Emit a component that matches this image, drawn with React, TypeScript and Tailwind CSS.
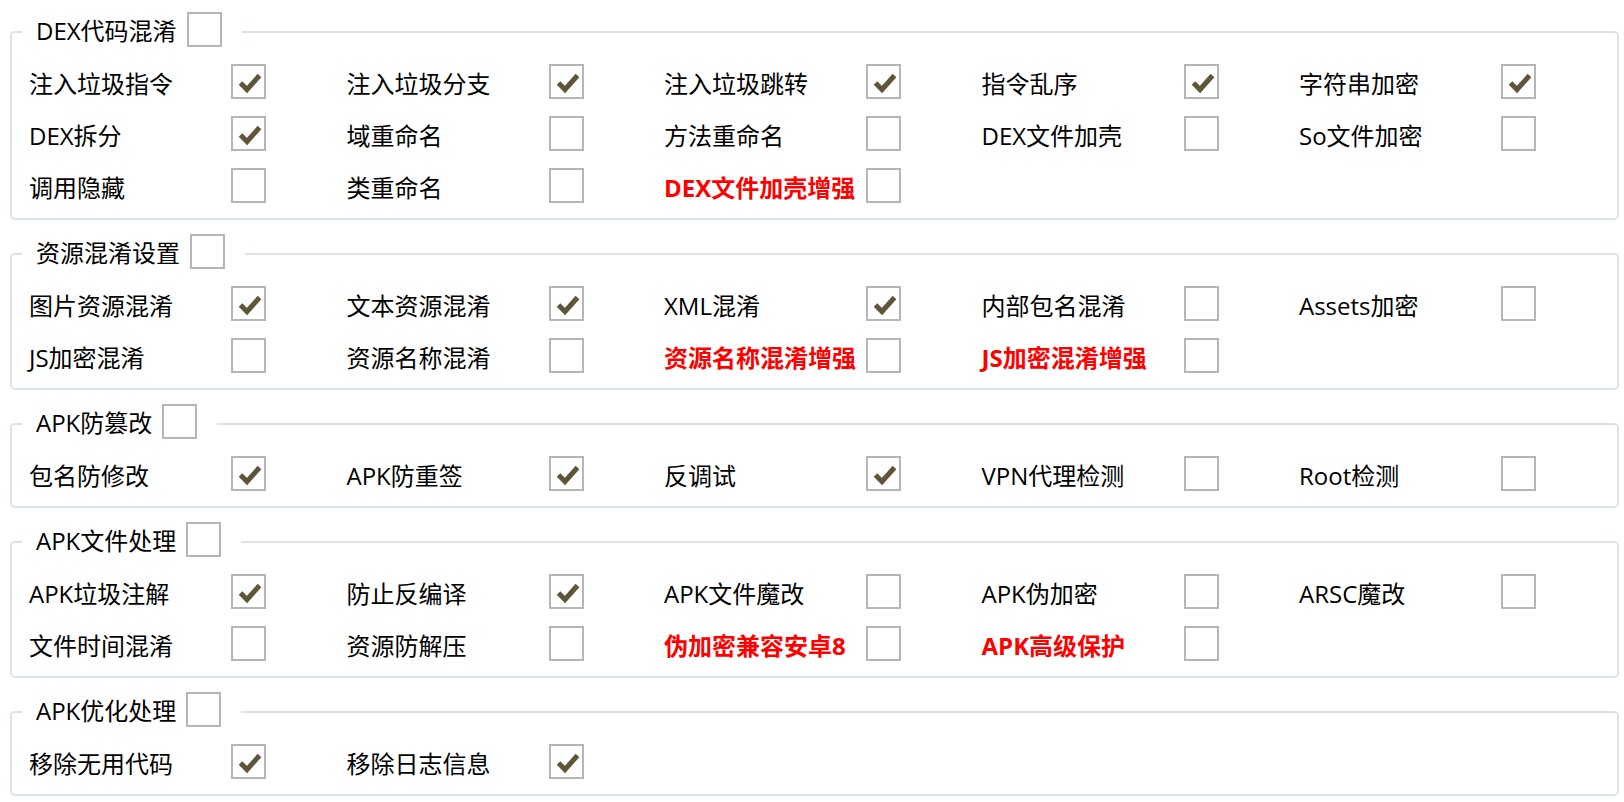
import { useState } from 'react'

type Option = { label: string; checked?: boolean; strong?: boolean }

interface Section {
  title: string
  rows: Option[][]
}

const sections: Section[] = [
  {
    title: 'DEX代码混淆',
    rows: [
      [
        { label: '注入垃圾指令', checked: true },
        { label: '注入垃圾分支', checked: true },
        { label: '注入垃圾跳转', checked: true },
        { label: '指令乱序', checked: true },
        { label: '字符串加密', checked: true },
      ],
      [
        { label: 'DEX拆分', checked: true },
        { label: '域重命名' },
        { label: '方法重命名' },
        { label: 'DEX文件加壳' },
        { label: 'So文件加密' },
      ],
      [{ label: '调用隐藏' }, { label: '类重命名' }, { label: 'DEX文件加壳增强', strong: true }],
    ],
  },
  {
    title: '资源混淆设置',
    rows: [
      [
        { label: '图片资源混淆', checked: true },
        { label: '文本资源混淆', checked: true },
        { label: 'XML混淆', checked: true },
        { label: '内部包名混淆' },
        { label: 'Assets加密' },
      ],
      [
        { label: 'JS加密混淆' },
        { label: '资源名称混淆' },
        { label: '资源名称混淆增强', strong: true },
        { label: 'JS加密混淆增强', strong: true },
      ],
    ],
  },
  {
    title: 'APK防篡改',
    rows: [
      [
        { label: '包名防修改', checked: true },
        { label: 'APK防重签', checked: true },
        { label: '反调试', checked: true },
        { label: 'VPN代理检测' },
        { label: 'Root检测' },
      ],
    ],
  },
  {
    title: 'APK文件处理',
    rows: [
      [
        { label: 'APK垃圾注解', checked: true },
        { label: '防止反编译', checked: true },
        { label: 'APK文件魔改' },
        { label: 'APK伪加密' },
        { label: 'ARSC魔改' },
      ],
      [
        { label: '文件时间混淆' },
        { label: '资源防解压' },
        { label: '伪加密兼容安卓8', strong: true },
        { label: 'APK高级保护', strong: true },
      ],
    ],
  },
  {
    title: 'APK优化处理',
    rows: [
      [
        { label: '移除无用代码', checked: true },
        { label: '移除日志信息', checked: true },
      ],
    ],
  },
]

function CheckBox({ initial = false }: { initial?: boolean }) {
  const [on, setOn] = useState(initial)
  return (
    <button
      type="button"
      onClick={() => setOn(!on)}
      className="flex h-[35px] w-[35px] shrink-0 items-center justify-center border-2 border-[#b6b6b6] bg-white"
    >
      {on && (
        <svg width="35" height="35" viewBox="0 0 35 35" className="-m-[2px]">
          <polyline
            points="9.5,19 16,25.5 28.5,11.5"
            fill="none"
            stroke="#5f5538"
            strokeWidth="5"
            strokeLinejoin="miter"
          />
        </svg>
      )}
    </button>
  )
}

function GroupBox({ section }: { section: Section }) {
  return (
    <fieldset className="w-[1607px] rounded-[5px] border-2 border-[#dbe3ea]">
      <legend className="ml-[10px] flex items-center gap-[10px] pb-[4px] pl-[14px] pr-[20px]">
        <span className="pt-[3px]">{section.title}</span>
        <CheckBox />
      </legend>
      <div className="grid grid-cols-[repeat(5,317.5px)] gap-y-[17px] pb-[15px] pl-[17px] pt-[13px]">
        {section.rows.map((row, r) =>
          [0, 1, 2, 3, 4].map((c) => {
            const opt = row[c]
            if (!opt) return <div key={`${r}-${c}`} />
            return (
              <div key={`${r}-${c}`} className="flex h-[35px] items-center">
                <span
                  className={`w-[202px] shrink-0 whitespace-nowrap pt-[4px] ${
                    opt.strong ? 'font-bold text-[#ff0000]' : 'text-black'
                  }`}
                >
                  {opt.label}
                </span>
                <CheckBox initial={opt.checked} />
              </div>
            )
          })
        )}
      </div>
    </fieldset>
  )
}

export default function App() {
  return (
    <div
      className="flex min-h-[802px] flex-col gap-[14px] bg-white pl-[10px] pt-[12px] text-[24px] leading-[30px]"
      style={{ fontFamily: '"Open Sans", "Noto Sans CJK SC", sans-serif' }}
    >
      {sections.map((s) => (
        <GroupBox key={s.title} section={s} />
      ))}
    </div>
  )
}
